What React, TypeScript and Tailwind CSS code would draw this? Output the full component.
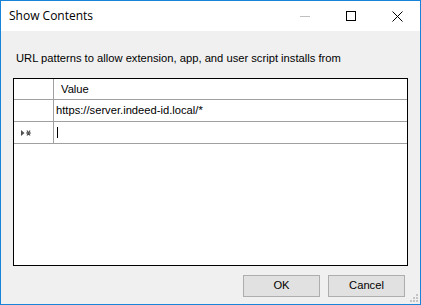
import React from 'react';

const font = { fontFamily: '"Liberation Sans", Arial, sans-serif' };

const App: React.FC = () => {
  return (
    <div className="w-[421px] h-[305px] border border-[#1883d7] bg-[#f0f0f0] flex flex-col text-[11.2px] text-black" style={font}>
      {/* title bar */}
      <div className="h-[30px] bg-white flex items-center shrink-0">
        <span className="pl-[8px] text-[12px] text-black flex-1" style={{ fontFamily: '"Open Sans", "Noto Sans", sans-serif' }}>
          Show Contents
        </span>
        <div className="flex items-center h-full">
          <div className="w-[46px] h-full flex items-center justify-center">
            <div className="w-[10px] h-px bg-[#c0c0c0]" />
          </div>
          <div className="w-[46px] h-full flex items-center justify-center">
            <div className="w-[10px] h-[10px] border border-black" />
          </div>
          <div className="w-[46px] h-full flex items-center justify-center">
            <svg width="11" height="11" viewBox="0 0 11 11" fill="none" stroke="#000" strokeWidth="1">
              <path d="M0.5 0.5 L10.5 10.5 M10.5 0.5 L0.5 10.5" />
            </svg>
          </div>
        </div>
      </div>

      {/* body */}
      <div className="flex-1 flex flex-col px-[12px] relative">
        <div className="pt-[21px] pl-[3px] leading-[13px]">
          URL patterns to allow extension, app, and user script installs from
        </div>

        <div className="mt-[13px] h-[188px] border border-black bg-white flex flex-col">
          <div className="flex h-[21px] border-b border-[#a0a0a0]">
            <div className="w-[40px] border-r border-[#a0a0a0]" />
            <div className="flex-1 flex items-center pl-[7px]">Value</div>
          </div>
          <div className="flex h-[22px] border-b border-[#a0a0a0]">
            <div className="w-[40px] border-r border-[#a0a0a0]" />
            <div className="flex-1 flex items-center pl-[2px]">https://server.indeed-id.local/*</div>
          </div>
          <div className="flex h-[22px] border-b border-[#a0a0a0]">
            <div className="w-[40px] border-r border-[#a0a0a0] flex items-center pl-[7px]">
              <svg width="10" height="6" viewBox="0 0 10 6">
                <path d="M0 0 L3.5 3 L0 6 Z" fill="#505050" />
                <path d="M5 3 L10 3 M6 0.5 L9 5.5 M9 0.5 L6 5.5" stroke="#505050" strokeWidth="1.2" />
              </svg>
            </div>
            <div className="flex-1 flex items-center pl-[3px]">
              <div className="w-px h-[11px] bg-black" />
            </div>
          </div>
        </div>

        <div className="flex justify-end gap-[8px] mt-[9px] pr-[3px]">
          <button className="w-[77px] h-[22px] bg-[#e1e1e1] border border-[#adadad] text-[11.2px] leading-none">OK</button>
          <button className="w-[77px] h-[22px] bg-[#e1e1e1] border border-[#adadad] text-[11.2px] leading-none">Cancel</button>
        </div>

        {/* resize grip */}
        <svg className="absolute right-[1px] bottom-[1px]" width="9" height="9" viewBox="0 0 9 9" fill="#c4c4c4">
          <rect x="6" y="0" width="2" height="2" />
          <rect x="3" y="3" width="2" height="2" />
          <rect x="6" y="3" width="2" height="2" />
          <rect x="0" y="6" width="2" height="2" />
          <rect x="3" y="6" width="2" height="2" />
          <rect x="6" y="6" width="2" height="2" />
        </svg>
      </div>
    </div>
  );
};

export default App;
